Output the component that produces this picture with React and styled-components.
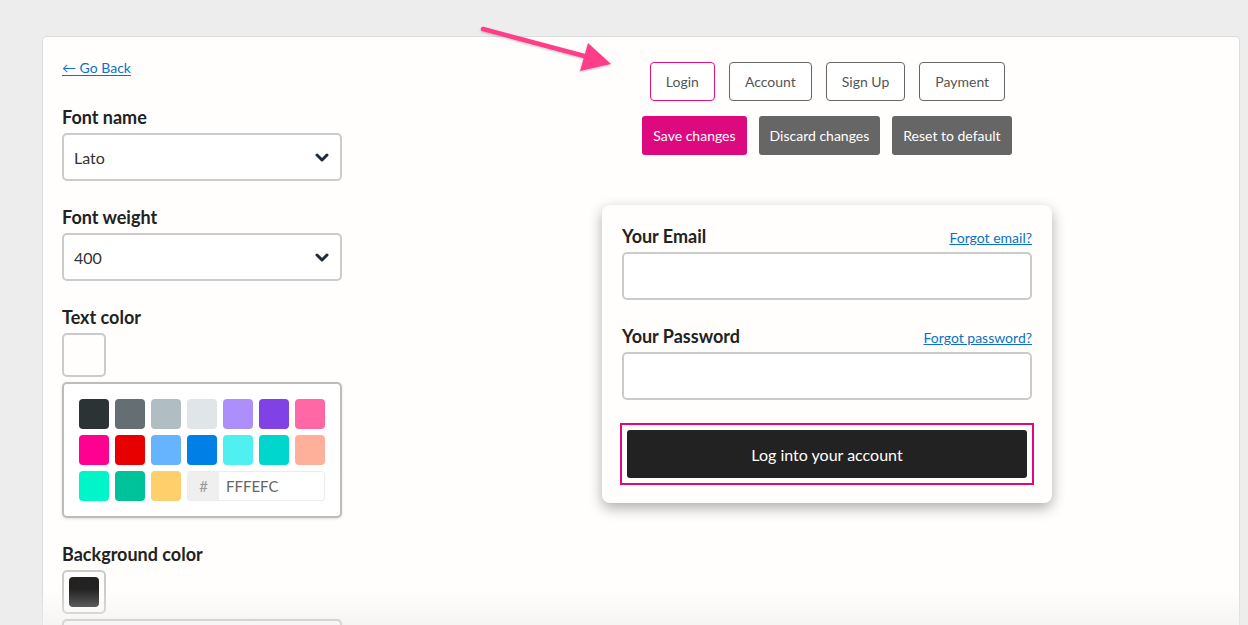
import React from 'react'
import styled, { createGlobalStyle } from 'styled-components'

const GlobalStyle = createGlobalStyle`
  html, body {
    margin: 0;
    padding: 0;
    background: #ededed;
    font-family: 'Lato', 'Open Sans', sans-serif;
    overflow: hidden;
  }
`

const textColors = [
  '#2c3335', '#656e72', '#b0bec3', '#dfe5e8', '#ac8ffb', '#8042e4', '#ff67a5',
  '#ff0091', '#e80000', '#66b4fe', '#0080e6', '#4ff0ef', '#00d6ce', '#ffb09b',
  '#00f6c8', '#00c29a', '#ffcf6b',
]

const Chevron = () => (
  <svg width="14" height="9" viewBox="0 0 14 9">
    <path d="M2 2 L7 7 L12 2" fill="none" stroke="#1e2b3b" strokeWidth="3" strokeLinecap="round" strokeLinejoin="round" />
  </svg>
)

const Arrow = () => (
  <ArrowSvg width="160" height="60" viewBox="0 0 160 60">
    <defs>
      <filter id="ash" x="-20%" y="-40%" width="140%" height="180%">
        <feDropShadow dx="0" dy="1" stdDeviation="1.2" floodColor="#000" floodOpacity="0.25" />
      </filter>
    </defs>
    <g filter="url(#ash)">
      <line x1="13" y1="9" x2="118" y2="37" stroke="#ff3d88" strokeWidth="4.5" strokeLinecap="round" />
      <polygon points="141,44 118,23 110,51" fill="#ff3d88" />
    </g>
  </ArrowSvg>
)

const Select = ({ value }) => (
  <SelectBox>
    <span>{value}</span>
    <Chevron />
  </SelectBox>
)

export default function App() {
  return (
    <>
      <GlobalStyle />
      <Page>
        <Card>
          <Sidebar>
            <BackLink href="#">← Go Back</BackLink>
            <Label first>Font name</Label>
            <Select value="Lato" />
            <Label>Font weight</Label>
            <Select value="400" />
            <Label>Text color</Label>
            <Swatch />
            <Palette>
              {textColors.map(c => <Chip key={c} style={{ background: c }} />)}
              <HexField>
                <Hash>#</Hash>
                <HexValue>FFFEFC</HexValue>
              </HexField>
            </Palette>
            <Label>Background color</Label>
            <Swatch><SwatchFill /></Swatch>
            <Palette short />
          </Sidebar>
          <Preview>
            <Tabs>
              <Tab active>Login</Tab>
              <Tab>Account</Tab>
              <Tab>Sign Up</Tab>
              <Tab>Payment</Tab>
            </Tabs>
            <Actions>
              <ActionButton primary>Save changes</ActionButton>
              <ActionButton>Discard changes</ActionButton>
              <ActionButton>Reset to default</ActionButton>
            </Actions>
            <LoginCard>
              <FieldHead>
                <FieldLabel>Your Email</FieldLabel>
                <SmallLink href="#">Forgot email?</SmallLink>
              </FieldHead>
              <Input />
              <FieldHead spaced>
                <FieldLabel>Your Password</FieldLabel>
                <SmallLink href="#">Forgot password?</SmallLink>
              </FieldHead>
              <Input />
              <Highlight>
                <SubmitButton>Log into your account</SubmitButton>
              </Highlight>
            </LoginCard>
          </Preview>
        </Card>
        <Arrow />
        <Fade />
      </Page>
    </>
  )
}

const Page = styled.div`
  position: relative;
  height: 625px;
  padding: 36px 8px 0 42px;
  box-sizing: border-box;
`
const Card = styled.div`
  display: flex;
  gap: 92px;
  width: 1198px;
  min-height: 620px;
  box-sizing: border-box;
  padding: 21px 19px 0 19px;
  background: #fffefc;
  border: 1px solid #dcdcdc;
  border-radius: 4px;
`
const Sidebar = styled.div`
  width: 280px;
  flex-shrink: 0;
  display: flex;
  flex-direction: column;
`
const BackLink = styled.a`
  align-self: flex-start;
  font-size: 14px;
  line-height: 20px;
  color: #0a72c8;
  text-decoration: underline;
  text-underline-offset: 2px;
`
const Label = styled.div`
  margin-top: ${p => (p.first ? '28px' : '25px')};
  margin-bottom: 5px;
  font-size: 18px;
  line-height: 22px;
  font-weight: 700;
  color: #222;
`
const SelectBox = styled.div`
  height: 48px;
  box-sizing: border-box;
  border: 2px solid #cbcbcb;
  border-radius: 5px;
  background: #fff;
  display: flex;
  align-items: center;
  justify-content: space-between;
  padding: 0 11px 0 10px;
  font-size: 16px;
  color: #333;
`
const Swatch = styled.div`
  width: 44px;
  height: 44px;
  box-sizing: border-box;
  border: 2px solid #cbcbcb;
  border-radius: 5px;
  background: #fffefc;
  display: flex;
  align-items: center;
  justify-content: center;
`
const SwatchFill = styled.div`
  width: 30px;
  height: 30px;
  border-radius: 4px;
  background: #222;
`
const Palette = styled.div`
  margin-top: 5px;
  box-sizing: border-box;
  border: 2px solid #bcbcbc;
  border-radius: 5px;
  background: #fff;
  padding: 15px;
  display: grid;
  grid-template-columns: repeat(7, 30px);
  grid-auto-rows: 30px;
  gap: 6px;
  height: ${p => (p.short ? '60px' : 'auto')};
  box-shadow: 0 1px 3px rgba(0, 0, 0, 0.12);
`
const Chip = styled.div`
  border-radius: 4px;
`
const HexField = styled.div`
  grid-column: span 4;
  display: flex;
  border: 1px solid #ececec;
  border-radius: 3px;
  overflow: hidden;
  background: #fff;
`
const Hash = styled.div`
  width: 31px;
  background: #efefef;
  color: #999;
  font-size: 15px;
  display: flex;
  align-items: center;
  justify-content: center;
`
const HexValue = styled.div`
  padding-left: 7px;
  display: flex;
  align-items: center;
  font-size: 15px;
  color: #666;
`
const Preview = styled.div`
  flex: 1;
  display: flex;
  flex-direction: column;
  align-items: center;
  padding-top: 4px;
`
const Tabs = styled.div`
  display: flex;
  gap: 14px;
  margin-left: 1px;
`
const Tab = styled.button`
  height: 39px;
  padding: 0 15px;
  box-sizing: border-box;
  background: #fff;
  border: 1px solid ${p => (p.active ? '#e0107f' : '#666')};
  border-radius: 4px;
  font-family: 'Lato', sans-serif;
  font-size: 14px;
  color: #555;
`
const Actions = styled.div`
  display: flex;
  gap: 12px;
  margin-top: 15px;
`
const ActionButton = styled.button`
  height: 39px;
  padding: 0 11px;
  border: none;
  border-radius: 3px;
  background: ${p => (p.primary ? '#dd0a7f' : '#666')};
  color: #fff;
  font-family: 'Lato', sans-serif;
  font-size: 14px;
`
const LoginCard = styled.div`
  margin-top: 50px;
  width: 450px;
  box-sizing: border-box;
  padding: 20px 20px 18px;
  background: #fffefc;
  border-radius: 8px;
  box-shadow: 0 5px 14px rgba(0, 0, 0, 0.32);
`
const FieldHead = styled.div`
  display: flex;
  justify-content: space-between;
  align-items: baseline;
  margin-top: ${p => (p.spaced ? '25px' : '0')};
  margin-bottom: 5px;
`
const FieldLabel = styled.div`
  font-size: 18px;
  line-height: 22px;
  font-weight: 700;
  color: #222;
`
const SmallLink = styled.a`
  font-size: 14px;
  color: #0a72c8;
  text-decoration: underline;
`
const Input = styled.div`
  height: 48px;
  box-sizing: border-box;
  border: 2px solid #cbcbcb;
  border-radius: 5px;
  background: #fff;
`
const Highlight = styled.div`
  margin: 23px -2px 0;
  border: 2px solid #dd0a7f;
  padding: 5px;
`
const SubmitButton = styled.button`
  width: 100%;
  height: 48px;
  border: none;
  border-radius: 3px;
  background: #222;
  color: #fff;
  font-family: 'Lato', sans-serif;
  font-size: 16px;
`
const ArrowSvg = styled.svg`
  position: absolute;
  left: 470px;
  top: 20px;
`
const Fade = styled.div`
  position: absolute;
  left: 0;
  right: 0;
  bottom: 0;
  height: 36px;
  pointer-events: none;
  background: linear-gradient(rgba(240, 240, 240, 0), rgba(238, 238, 238, 0.55));
`
